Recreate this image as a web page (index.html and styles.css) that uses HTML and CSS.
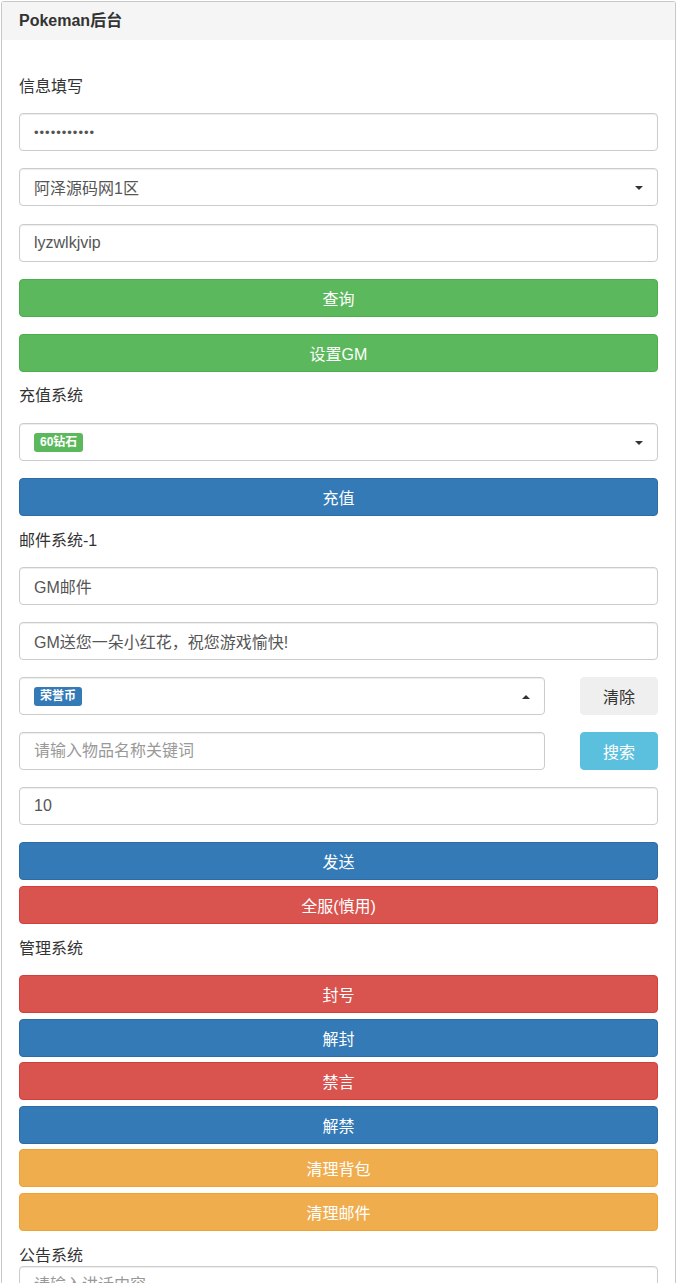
FILE: index.html
```html
<!DOCTYPE html>
<html>
<head>
<meta charset="utf-8">
<link rel="stylesheet" href="styles.css">
</head>
<body>

<div class="panel">
  <div class="panel-heading">Pokeman后台</div>
  <div class="panel-body">

    <div class="title">信息填写</div>
    <div class="group loose">
      <input class="form-control" type="password" value="12345678901">
      <div class="select">阿泽源码网1区<span class="caret"></span></div>
      <input class="form-control" type="text" value="lyzwlkjvip">
      <button class="btn btn-success">查询</button>
      <button class="btn btn-success">设置GM</button>
    </div>

    <div class="title wide">充值系统</div>
    <div class="group">
      <div class="select"><span class="tag tag-green">60钻石</span><span class="caret"></span></div>
      <button class="btn btn-primary">充值</button>
    </div>

    <div class="title">邮件系统-1</div>
    <div class="group joined">
      <input class="form-control" type="text" value="GM邮件">
      <input class="form-control" type="text" value="GM送您一朵小红花，祝您游戏愉快!">
      <div class="row">
        <div class="select"><span class="tag tag-blue">荣誉币</span><span class="caret up"></span></div>
        <button class="btn btn-default">清除</button>
      </div>
      <div class="row">
        <input class="form-control" type="text" placeholder="请输入物品名称关键词">
        <button class="btn btn-info">搜索</button>
      </div>
      <input class="form-control" type="text" value="10">
    </div>
    <div class="group tight pair">
      <button class="btn btn-primary">发送</button>
      <button class="btn btn-danger">全服(慎用)</button>
    </div>

    <div class="title">管理系统</div>
    <div class="group tight">
      <button class="btn btn-danger">封号</button>
      <button class="btn btn-primary">解封</button>
      <button class="btn btn-danger">禁言</button>
      <button class="btn btn-primary">解禁</button>
      <button class="btn btn-warning">清理背包</button>
      <button class="btn btn-warning">清理邮件</button>
    </div>

    <div class="title flush">公告系统</div>
    <div class="group">
      <input class="form-control" type="text" placeholder="请输入讲话内容">
    </div>

  </div>
</div>

</body>
</html>
```

FILE: styles.css
```css
* {box-sizing: border-box;}

body {
  margin: 0;
  font-family: "Liberation Sans", "Noto Sans CJK SC", sans-serif;
  font-size: 16px;
  color: #333;
  background: #fff;
}

.panel {
  margin: 1px 1px 0 1px;
  border: 1px solid #c8c8c8;
  border-bottom: 0;
  border-radius: 3px 3px 0 0;
  min-height: 1290px;
}

.panel-heading {
  height: 38px;
  line-height: 38px;
  padding: 0 17px;
  background: #f5f5f5;
  font-weight: bold;
  font-size: 16px;
  color: #333;
}

.panel-body {
  padding: 37px 17px 0 17px;
}

.title {
  height: 20px;
  line-height: 20px;
  font-size: 16px;
  color: #333;
  margin-bottom: 16px;
}
.title.wide {margin-bottom: 17px;}
.title.flush {margin-bottom: 0;}

.group {
  display: flex;
  flex-direction: column;
  gap: 17px;
  margin-bottom: 15px;
}
.group.loose {gap: 17.25px; margin-bottom: 14px;}
.group.joined {margin-bottom: 17px;}
.group.tight {gap: 5.5px; margin-bottom: 15.5px;}
.group.pair {gap: 6px; margin-bottom: 15px;}

.form-control, .select {
  display: block;
  width: 100%;
  height: 38px;
  padding: 0 14px;
  border: 1px solid #ccc;
  border-radius: 4px;
  box-shadow: inset 0 1px 1px rgba(0,0,0,.075);
  font-family: inherit;
  font-size: 16px;
  color: #555;
  background: #fff;
  outline: none;
}
.form-control::placeholder {color: #999;}
input[type=password] {letter-spacing: 1px; font-size: 13px;}

.select {
  display: flex;
  align-items: center;
  position: relative;
}

.caret {
  position: absolute;
  right: 14px;
  top: 17px;
  border-left: 4px solid transparent;
  border-right: 4px solid transparent;
  border-top: 4px solid #333;
}
.caret.up {
  border-top: 0;
  border-bottom: 4px solid #333;
}

.tag {
  display: inline-block;
  height: 19px;
  line-height: 19px;
  padding: 0 6px;
  border-radius: 3px;
  font-size: 12px;
  font-weight: bold;
  color: #fff;
}
.tag-green {background: #5cb85c;}
.tag-blue {background: #337ab7;}

.row {
  display: grid;
  grid-template-columns: 1fr 78px;
  gap: 35px;
}

.btn {
  display: block;
  width: 100%;
  height: 38px;
  border: 1px solid transparent;
  border-radius: 4px;
  font-family: inherit;
  font-size: 16px;
  color: #fff;
  cursor: pointer;
}
.btn-success {background: #5cb85c; border-color: #4cae4c;}
.btn-primary {background: #337ab7; border-color: #2e6da4;}
.btn-danger {background: #d9534f; border-color: #d43f3a;}
.btn-warning {background: #f0ad4e; border-color: #eea236;}
.btn-info {background: #5bc0de; border-color: #5bc0de;}
.btn-default {background: #efefef; border-color: #efefef; color: #333;}
```
